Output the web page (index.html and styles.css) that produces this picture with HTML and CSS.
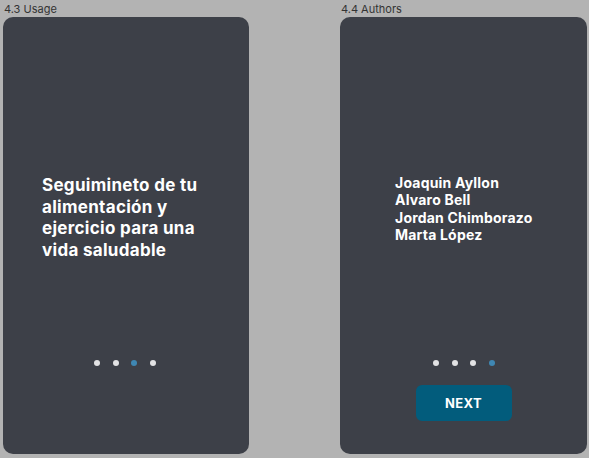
FILE: index.html
```html
<!DOCTYPE html>
<html lang="es">
<head>
<meta charset="utf-8">
<title>Onboarding</title>
<link rel="stylesheet" href="styles.css">
</head>
<body>
<main class="board">
  <section class="frame frame-usage">
    <div class="frame-label">4.3 Usage</div>
    <div class="card">
      <h2 class="usage-text">Seguimineto de tu<br>alimentación y<br>ejercicio para una<br>vida saludable</h2>
      <div class="dots dots-usage">
        <span class="dot"></span><span class="dot"></span><span class="dot active"></span><span class="dot"></span>
      </div>
    </div>
  </section>
  <section class="frame frame-authors">
    <div class="frame-label">4.4 Authors</div>
    <div class="card">
      <ul class="authors">
        <li>Joaquin Ayllon</li>
        <li>Alvaro Bell</li>
        <li>Jordan Chimborazo</li>
        <li>Marta López</li>
      </ul>
      <div class="dots dots-authors">
        <span class="dot"></span><span class="dot"></span><span class="dot"></span><span class="dot active"></span>
      </div>
      <button class="next" type="button">NEXT</button>
    </div>
  </section>
</main>
</body>
</html>
```
FILE: styles.css
```css
* { box-sizing: border-box; }
html, body { margin: 0; padding: 0; }
body {
  background: #b3b3b3;
  font-family: Inter, "Noto Sans", sans-serif;
  width: 589px;
  height: 458px;
  overflow: hidden;
}
.board {
  display: flex;
  gap: 91px;
  padding-left: 3px;
  padding-top: 2px;
}
.frame { display: flex; flex-direction: column; }
.frame-usage { width: 246px; }
.frame-authors { width: 247px; }
.frame-label {
  font-size: 11px;
  line-height: 15px;
  color: #333333;
  height: 15px;
  padding-left: 1px;
}
.card {
  background: #3d4048;
  border-radius: 10px;
  height: 437px;
  display: flex;
  flex-direction: column;
  align-items: center;
}
.usage-text {
  align-self: flex-start;
  margin: 158px 0 0 39px;
  font-size: 17px;
  line-height: 21.5px;
  font-weight: 700;
  letter-spacing: 0.3px;
  color: #ffffff;
}
.authors {
  align-self: flex-start;
  list-style: none;
  margin: 157px 0 0 55px;
  padding: 0;
  font-size: 14px;
  line-height: 17.3px;
  font-weight: 700;
  letter-spacing: 0.2px;
  color: #ffffff;
}
.dots {
  display: flex;
  gap: 12.5px;
}
.dots-usage { margin-top: 99px; margin-left: -2px; }
.dots-authors { margin-top: 117px; margin-left: 1px; }
.dot {
  width: 6px;
  height: 6px;
  border-radius: 50%;
  background: #e2e2e4;
}
.dot.active { background: #3f87b3; }
.next {
  margin-top: 19px;
  width: 96px;
  height: 36px;
  border: 0;
  border-radius: 6px;
  background: #025c7c;
  color: #ffffff;
  font-family: Inter, "Noto Sans", sans-serif;
  font-size: 13px;
  font-weight: 700;
  letter-spacing: 0.3px;
}
```
